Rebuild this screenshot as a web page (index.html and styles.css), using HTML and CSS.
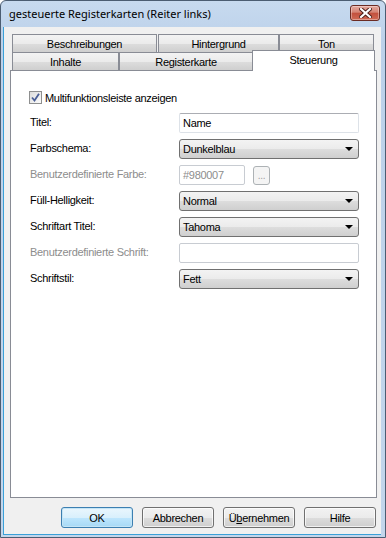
FILE: index.html
```html
<!DOCTYPE html>
<html lang="de">
<head>
<meta charset="utf-8">
<title>gesteuerte Registerkarten (Reiter links)</title>
<link rel="stylesheet" href="styles.css">
</head>
<body>
<div class="window">
  <div class="titlebar">
    <span class="title">gesteuerte Registerkarten (Reiter links)</span>
    <span class="close">
      <svg width="13" height="10" viewBox="0 0 13 10">
        <path d="M2 1 L11 9 M11 1 L2 9" stroke="#4a1d17" stroke-width="4" stroke-linecap="square"/>
        <path d="M2 1 L11 9 M11 1 L2 9" stroke="#ffffff" stroke-width="2.2" stroke-linecap="square"/>
      </svg>
    </span>
  </div>
  <div class="client">
    <div class="tabstrip">
      <div class="tabrow">
        <div class="tab t-besch">Beschreibungen</div>
        <div class="tab t-hint">Hintergrund</div>
        <div class="tab t-ton">Ton</div>
      </div>
      <div class="tabrow">
        <div class="tab t-inh">Inhalte</div>
        <div class="tab t-reg">Registerkarte</div>
        <div class="tab t-steu selected">Steuerung</div>
      </div>
    </div>
    <div class="panel">
      <div class="check">
        <span class="box">
          <svg width="11" height="11" viewBox="0 0 11 11">
            <path d="M2 5.5 L4.5 8.5 L9 1.8" fill="none" stroke="#4a5f97" stroke-width="1.8"/>
          </svg>
        </span>
        <span>Multifunktionsleiste anzeigen</span>
      </div>
      <div class="form">
        <span class="lbl">Titel:</span>
        <div class="textbox">Name</div>

        <span class="lbl">Farbschema:</span>
        <div class="select">Dunkelblau<span class="arrow"></span></div>

        <span class="lbl disabled">Benutzerdefinierte Farbe:</span>
        <div class="colorrow">
          <div class="textbox off">#980007</div>
          <div class="dots">...</div>
        </div>

        <span class="lbl">Füll-Helligkeit:</span>
        <div class="select">Normal<span class="arrow"></span></div>

        <span class="lbl">Schriftart Titel:</span>
        <div class="select">Tahoma<span class="arrow"></span></div>

        <span class="lbl disabled">Benutzerdefinierte Schrift:</span>
        <div class="textbox off"></div>

        <span class="lbl">Schriftstil:</span>
        <div class="select">Fett<span class="arrow"></span></div>
      </div>
    </div>
    <div class="buttons">
      <div class="btn default">OK</div>
      <div class="btn">Abbrechen</div>
      <div class="btn">Ü<u>b</u>ernehmen</div>
      <div class="btn">Hilfe</div>
    </div>
  </div>
</div>
</body>
</html>
```

FILE: styles.css
```css
* { box-sizing: border-box; }
html, body { margin: 0; padding: 0; }
body {
  width: 386px;
  height: 538px;
  overflow: hidden;
  background: #ffffff;
  font-family: "Liberation Sans", Arial, sans-serif;
  font-size: 11px;
  letter-spacing: -0.3px;
  color: #000;
}
.window {
  width: 386px;
  height: 538px;
  display: flex;
  flex-direction: column;
  background: linear-gradient(#c7daef, #bcd1ea 40px, #c3d6ec);
  border: 1px solid #4b5d72;
  border-radius: 6px 6px 0 0;
  padding: 0 4px 2px 2px;
}
.titlebar {
  height: 26px;
  flex: none;
  display: flex;
  align-items: center;
  justify-content: space-between;
  padding: 0 1px 0 6px;
}
.title {
  font-family: "Noto Sans", "Open Sans", sans-serif;
  font-size: 11px;
  letter-spacing: 0;
  color: #000;
  margin-top: -1px;
}
.close {
  width: 30px;
  height: 16px;
  margin-top: -2px;
  border: 1px solid #6b2b23;
  border-radius: 3px;
  background: linear-gradient(#e5a99f, #d58373 45%, #c2503d 50%, #cf6a55);
  display: flex;
  align-items: center;
  justify-content: center;
  box-shadow: inset 0 0 0 1px rgba(255,255,255,0.35);
}
.client {
  flex: 1;
  background: #f0f0f0;
  display: flex;
  flex-direction: column;
  padding: 7px 4px 0 6px;
  border-left: 1px solid #3aa0d8;
  border-bottom: 1px solid #3aa0d8;
}
.tabstrip {
  height: 36px;
  padding: 0 2px;
  flex: none;
}
.tabrow {
  display: flex;
  align-items: flex-start;
  height: 18px;
}
.tab {
  height: 18px;
  border: 1px solid #898c95;
  border-bottom: none;
  background: linear-gradient(#f3f3f3, #ebebeb 50%, #dddddd 51%, #cfcfcf);
  display: flex;
  align-items: center;
  justify-content: center;
  padding-top: 1px;
}
.t-besch { width: 145px; margin-right: 1px; }
.t-hint { width: 121px; }
.t-ton { width: 95px; }
.t-inh { width: 107px; }
.t-reg { width: 134px; }
.t-steu { width: 119px; }
.tab.selected {
  position: relative;
  z-index: 2;
  background: #ffffff;
  height: 21px;
  margin: -2px -2px -1px -1px;
  width: 123px;
  padding-top: 0;
  padding-bottom: 3px;
}
.panel {
  height: 428px;
  flex: none;
  background: #ffffff;
  border: 1px solid #898c95;
  padding: 20px 0 0 19px;
}
.check {
  display: flex;
  align-items: center;
  height: 13px;
  margin-left: -1px;
}
.box {
  width: 13px;
  height: 13px;
  border: 1px solid #8e8f8f;
  background: linear-gradient(135deg, #dcdcdc, #fbfbfb);
  display: flex;
  align-items: center;
  justify-content: center;
  margin-right: 3px;
}
.form {
  margin-top: 9px;
  display: grid;
  grid-template-columns: 149px 180px;
  grid-auto-rows: 20px;
  row-gap: 6px;
}
.lbl {
  display: flex;
  align-items: center;
  padding-bottom: 2px;
}
.lbl.disabled { color: #8d8d8d; }
.textbox {
  height: 20px;
  background: #fff;
  border: 1px solid #dde2e8;
  border-top-color: #abadb3;
  border-radius: 2px;
  padding-left: 3px;
  display: flex;
  align-items: center;
}
.textbox.off {
  color: #8d8d8d;
  border-color: #c8ccd2;
}
.colorrow {
  display: flex;
  align-items: center;
  gap: 8px;
}
.colorrow .textbox { width: 66px; }
.dots {
  width: 17px;
  height: 19px;
  border: 1px solid #adb2b5;
  border-radius: 3px;
  background: #f4f4f4;
  color: #a0a0a0;
  display: flex;
  align-items: center;
  justify-content: center;
  font-size: 10px;
}
.select {
  height: 20px;
  border: 1px solid #707070;
  border-radius: 3px;
  background: linear-gradient(#f3f3f3, #ebebeb 50%, #dddddd 51%, #cfcfcf);
  padding-left: 3px;
  display: flex;
  align-items: center;
  justify-content: space-between;
  padding-right: 5px;
}
.arrow {
  width: 0;
  height: 0;
  border-left: 4px solid transparent;
  border-right: 4px solid transparent;
  border-top: 4px solid #000;
}
.buttons {
  display: flex;
  justify-content: flex-end;
  gap: 9px;
  margin-top: 9px;
  padding-right: 1px;
}
.btn {
  width: 72px;
  height: 21px;
  border: 1px solid #707070;
  border-radius: 3px;
  background: linear-gradient(#f2f2f2, #ebebeb 50%, #dddddd 51%, #cfcfcf);
  display: flex;
  align-items: center;
  justify-content: center;
  box-shadow: inset 0 0 0 1px rgba(255,255,255,0.7);
}
.btn.default {
  border-color: #3c7fb1;
  background: linear-gradient(#eaf6fd, #d9f0fc 50%, #bee6fd 51%, #a7d9f5);
  box-shadow: inset 0 0 0 1px #c4e5f6;
}
```
